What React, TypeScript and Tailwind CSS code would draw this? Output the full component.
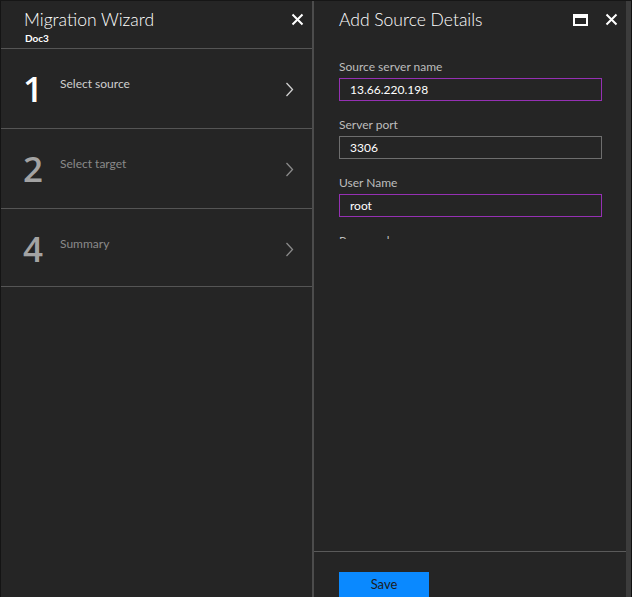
import React from "react";

const font = { fontFamily: "Lato, 'Open Sans', sans-serif" };
const digitFont = { fontFamily: "'Open Sans', 'Noto Sans', sans-serif" };

function Chevron({ color }: { color: string }) {
  return (
    <svg width="9" height="15" viewBox="0 0 9 15" className="mt-[33px] mr-[18px]">
      <polyline points="1.5,1 7.5,7.5 1.5,14" fill="none" stroke={color} strokeWidth="1.3" />
    </svg>
  );
}

function CloseIcon() {
  return (
    <svg width="13" height="13" viewBox="0 0 13 13">
      <path d="M1.5 1.5 L11.5 11.5 M11.5 1.5 L1.5 11.5" stroke="#fff" strokeWidth="2" />
    </svg>
  );
}

function MaxIcon() {
  return (
    <svg width="15" height="12" viewBox="0 0 15 12">
      <rect x="1" y="1" width="13" height="10" fill="none" stroke="#fff" strokeWidth="2" />
      <rect x="1" y="1" width="13" height="3" fill="#fff" />
    </svg>
  );
}

const steps = [
  { n: "1", label: "Select source", active: true, h: "h-[79px]" },
  { n: "2", label: "Select target", active: false, h: "h-[79px]" },
  { n: "4", label: "Summary", active: false, h: "h-[77px]" },
];

const fields = [
  { label: "Source server name", value: "13.66.220.198", focus: true },
  { label: "Server port", value: "3306", focus: false },
  { label: "User Name", value: "root", focus: true },
  { label: "Password", value: "", focus: false },
];

export default function App() {
  return (
    <div style={font} className="w-[632px] h-[597px] flex bg-[#111] border-t border-[#161616] overflow-hidden">
      <div className="w-[1px] bg-[#141414]" />
      {/* wizard */}
      <div className="w-[311px] bg-[#252525] flex flex-col">
        <div className="h-[47px] flex justify-between pl-[23px] pr-[8px]">
          <div>
            <div className="text-[17.5px] leading-[22px] font-light text-white mt-[8px]">Migration Wizard</div>
            <div className="text-[10px] leading-[12px] font-bold text-white mt-[1px] pl-[1px]">Doc3</div>
          </div>
          <div className="mt-[12px]"><CloseIcon /></div>
        </div>
        <div className="h-px bg-[#555]" />
        {steps.map((s) => (
          <div key={s.n}>
            <div className={`${s.h} flex items-start pl-[22px]`}>
              <div
                style={digitFont}
                className={`w-[37px] mt-[23px] text-[35px] leading-[34px] font-semibold ${s.active ? "text-white" : "text-[#a3a3a3]"}`}
              >
                {s.n}
              </div>
              <div className={`flex-1 mt-[27px] text-[12px] leading-[16px] ${s.active ? "text-[#cfcfcf]" : "text-[#8a8a8a]"}`}>
                {s.label}
              </div>
              <Chevron color={s.active ? "#d0d0d0" : "#8a8a8a"} />
            </div>
            <div className="h-px bg-[#555]" />
          </div>
        ))}
      </div>
      <div className="w-[2px] bg-[#4c4c4c]" />
      {/* details blade */}
      <div className="w-[312px] bg-[#252525] flex flex-col">
        <div className="h-[238px] overflow-hidden pl-[25px] pr-[8px]">
          <div className="flex justify-between">
            <div className="text-[17.5px] leading-[22px] font-light text-white mt-[8px]">Add Source Details</div>
            <div className="flex items-center gap-[17px] mt-[12px] h-[13px]">
              <MaxIcon />
              <CloseIcon />
            </div>
          </div>
          <div className="mt-[28px] flex flex-col gap-[16px]">
            {fields.map((f) => (
              <div key={f.label}>
                <div className="text-[12px] leading-[16px] text-[#bdbdbd]">{f.label}</div>
                <div
                  className={`mt-[3px] h-[23px] w-[263px] border flex items-center pl-[10px] text-[12px] text-white ${f.focus ? "border-[#9530b3]" : "border-[#6e6e6e]"}`}
                >
                  {f.value}
                </div>
              </div>
            ))}
          </div>
        </div>
        <div className="flex-1" />
        <div className="h-px bg-[#5a5a5a]" />
        <div className="h-[45px] pt-[20px] pl-[25px] overflow-hidden">
          <button className="w-[90px] h-[26px] bg-[#0a89ff] text-[13px] text-[#1c1c1c] flex items-center justify-center">
            Save
          </button>
        </div>
      </div>
      <div className="w-[5px] bg-[#3c3c3c]" />
      <div className="w-[1px] bg-[#111]" />
    </div>
  );
}
